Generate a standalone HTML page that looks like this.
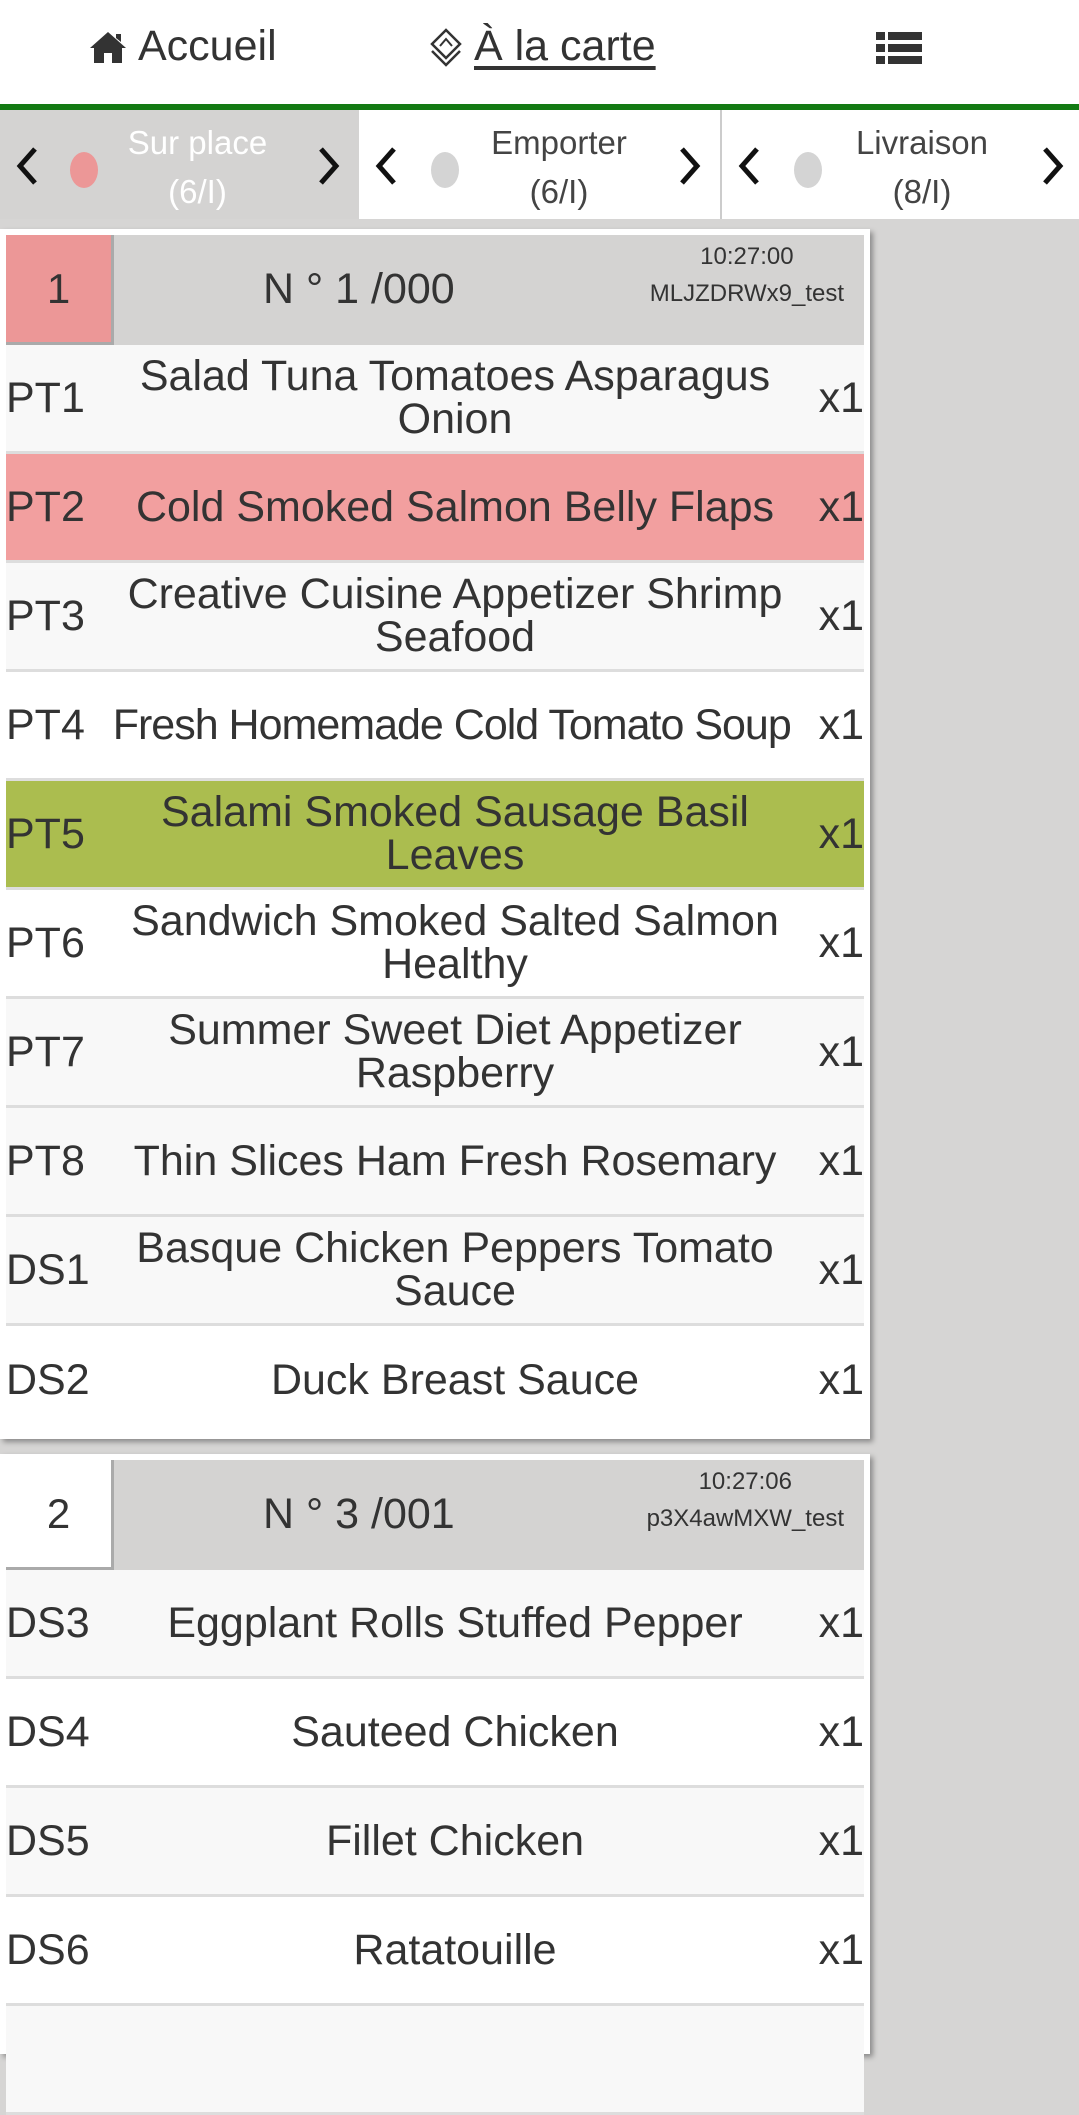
<!DOCTYPE html>
<html><head><meta charset="utf-8"><style>
*{box-sizing:border-box;margin:0;padding:0}
body{width:1079px;height:2037px;overflow:hidden;background:#d6d5d4;font-family:"Liberation Sans",Arial,sans-serif;color:#333}
.top{height:104px;background:#fff;position:relative}
.top .it{position:absolute;top:22px;font-size:43px;color:#333;display:flex;align-items:center;gap:10px}
.green{height:6px;background:#137a13}
.tabs{height:109px;display:flex}
.tab{position:relative;height:109px;background:#fff}
.tab svg.ch{position:absolute;top:144px;top:36px}
.dot{position:absolute;top:42px;width:28px;height:36px;border-radius:50%;background:#d4d4d4}
.tab .t{position:absolute;top:8px;text-align:center;font-size:33px;line-height:49px;color:#444}
.card{position:absolute;left:0;width:870px;background:#fff;box-shadow:3px 3px 5px rgba(0,0,0,.35);padding:6px 6px 0 6px}
.hd{height:110px;background:#d4d3d2;position:relative}
.num{position:absolute;left:0;top:0;width:108px;height:110px;font-size:42px;display:flex;align-items:center;justify-content:center;border-right:3px solid #aaa;border-bottom:3px solid #aaa}
.hd .n{position:absolute;left:257px;top:30px;font-size:43px}
.hd .tm{position:absolute;right:20px;top:3px;text-align:center;font-size:24px;line-height:37px}
.row{height:109px;display:flex;align-items:center;border-bottom:3px solid #ddd;font-size:43px;background:#fff}
.row.a{background:#f8f8f8}
.row .c{width:90px;flex:none}
.row .m{flex:1;text-align:center;line-height:43px;padding:0 6px}
.row .q{flex:none;width:50px;text-align:right}
</style></head><body>
<div class="top">
 <div class="it" style="left:88px"><svg width="40" height="34" viewBox="0 0 40 34"><path d="M20 2 L2 18 L6 18 L6 33 L16 33 L16 23 L24 23 L24 33 L34 33 L34 18 L38 18 Z M28 4 h5 v8 l-5 -4z" fill="#333"/></svg>Accueil</div>
 <div class="it" style="left:428px"><svg width="36" height="40" viewBox="0 0 36 40"><path d="M18 3 L32 17 L18 31 L4 17 Z M4 24 L18 38 L32 24" fill="none" stroke="#333" stroke-width="2.5"/><path d="M12 19 L18 12 L24 19" fill="none" stroke="#333" stroke-width="2"/></svg><span style="text-decoration:underline;text-underline-offset:6px">À la carte</span></div>
 <div class="it" style="left:876px;top:32px"><svg width="46" height="32" viewBox="0 0 46 32"><rect x="0" y="0" width="9" height="8" fill="#333"/><rect x="12" y="0" width="34" height="8" fill="#333"/><rect x="0" y="12" width="9" height="8" fill="#333"/><rect x="12" y="12" width="34" height="8" fill="#333"/><rect x="0" y="24" width="9" height="8" fill="#333"/><rect x="12" y="24" width="34" height="8" fill="#333"/></svg></div>
</div>
<div class="green"></div>
<div class="tabs">
 <div class="tab" style="width:359px;background:#d4d3d2">
  <svg class="ch" style="left:14px" width="26" height="40" viewBox="0 0 26 40"><path d="M21 3 L6 20 L21 37" fill="none" stroke="#111" stroke-width="5"/></svg>
  <div class="dot" style="left:70px;background:#ec9797"></div><div class="t" style="left:110px;width:175px;color:#fff">Sur place<br>(6/I)</div>
  <svg class="ch" style="left:316px" width="26" height="40" viewBox="0 0 26 40"><path d="M5 3 L20 20 L5 37" fill="none" stroke="#111" stroke-width="5"/></svg></div>
 <div class="tab" style="width:363px;border-right:2px solid #ccc">
  <svg class="ch" style="left:14px" width="26" height="40" viewBox="0 0 26 40"><path d="M21 3 L6 20 L21 37" fill="none" stroke="#111" stroke-width="5"/></svg>
  <div class="dot" style="left:72px"></div><div class="t" style="left:110px;width:180px">Emporter<br>(6/I)</div>
  <svg class="ch" style="left:318px" width="26" height="40" viewBox="0 0 26 40"><path d="M5 3 L20 20 L5 37" fill="none" stroke="#111" stroke-width="5"/></svg></div>
 <div class="tab" style="width:357px">
  <svg class="ch" style="left:14px" width="26" height="40" viewBox="0 0 26 40"><path d="M21 3 L6 20 L21 37" fill="none" stroke="#111" stroke-width="5"/></svg>
  <div class="dot" style="left:72px"></div><div class="t" style="left:110px;width:180px">Livraison<br>(8/I)</div>
  <svg class="ch" style="left:318px" width="26" height="40" viewBox="0 0 26 40"><path d="M5 3 L20 20 L5 37" fill="none" stroke="#111" stroke-width="5"/></svg></div>
</div>
<div class="card" style="top:229px;height:1210px">
 <div class="hd"><div class="num" style="background:#ec9797">1</div><div class="n">N ° 1 /000</div><div class="tm">10:27:00<br>MLJZDRWx9_test</div></div>
 <div class="row a"><span class="c">PT1</span><span class="m">Salad Tuna Tomatoes Asparagus Onion</span><span class="q">x1</span></div>
 <div class="row" style="background:#f29f9f"><span class="c">PT2</span><span class="m">Cold Smoked Salmon Belly Flaps</span><span class="q">x1</span></div>
 <div class="row a"><span class="c">PT3</span><span class="m">Creative Cuisine Appetizer Shrimp Seafood</span><span class="q">x1</span></div>
 <div class="row"><span class="c" style="width:auto">PT4</span><span class="m" style="padding:0 2px;white-space:nowrap;letter-spacing:-1px">Fresh Homemade Cold Tomato Soup</span><span class="q" style="width:auto">x1</span></div>
 <div class="row" style="background:#abbd4f"><span class="c">PT5</span><span class="m" style="padding:0 30px">Salami Smoked Sausage Basil Leaves</span><span class="q">x1</span></div>
 <div class="row"><span class="c">PT6</span><span class="m">Sandwich Smoked Salted Salmon Healthy</span><span class="q">x1</span></div>
 <div class="row a"><span class="c">PT7</span><span class="m" style="padding:0 40px">Summer Sweet Diet Appetizer Raspberry</span><span class="q">x1</span></div>
 <div class="row a"><span class="c">PT8</span><span class="m">Thin Slices Ham Fresh Rosemary</span><span class="q">x1</span></div>
 <div class="row a"><span class="c">DS1</span><span class="m">Basque Chicken Peppers Tomato Sauce</span><span class="q">x1</span></div>
 <div class="row" style="border-bottom:none"><span class="c">DS2</span><span class="m">Duck Breast Sauce</span><span class="q">x1</span></div>
</div>
<div class="card" style="top:1454px;height:600px">
 <div class="hd"><div class="num" style="background:#fff">2</div><div class="n">N ° 3 /001</div><div class="tm">10:27:06<br>p3X4awMXW_test</div></div>
 <div class="row a"><span class="c">DS3</span><span class="m">Eggplant Rolls Stuffed Pepper</span><span class="q">x1</span></div>
 <div class="row"><span class="c">DS4</span><span class="m">Sauteed Chicken</span><span class="q">x1</span></div>
 <div class="row a"><span class="c">DS5</span><span class="m">Fillet Chicken</span><span class="q">x1</span></div>
 <div class="row"><span class="c">DS6</span><span class="m">Ratatouille</span><span class="q">x1</span></div>
 <div class="row a"></div>
</div>
</body></html>
